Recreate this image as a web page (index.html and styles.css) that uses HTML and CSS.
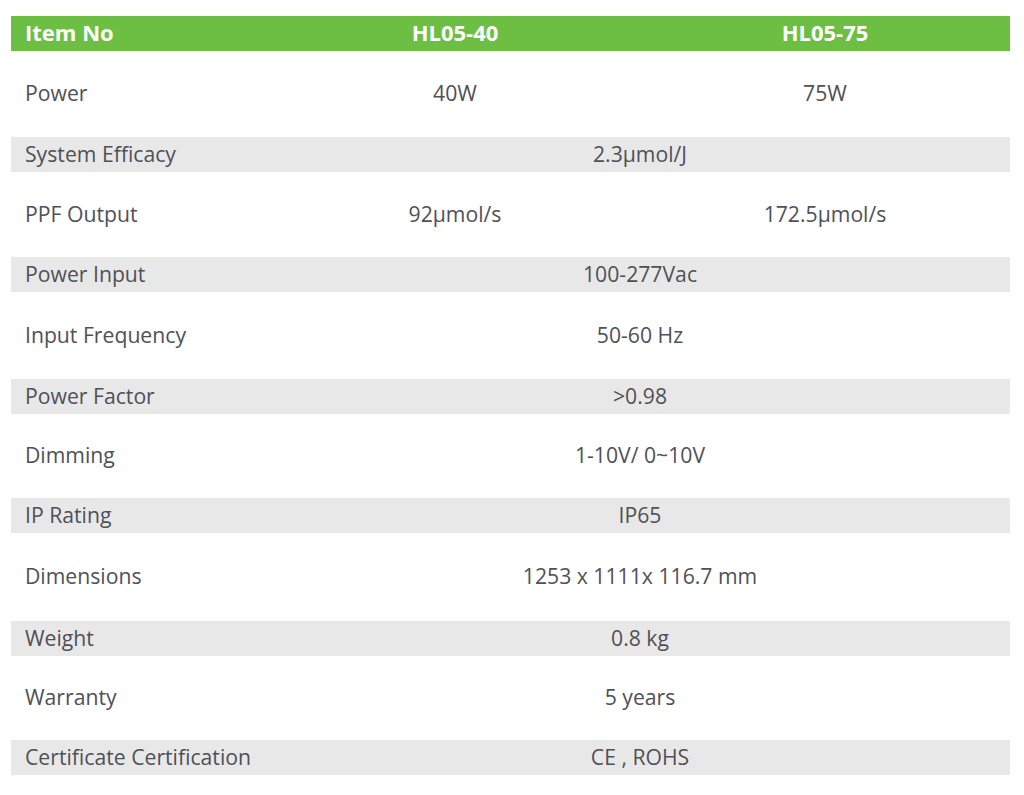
FILE: index.html
```html
<!DOCTYPE html>
<html>
<head>
<meta charset="utf-8">
<link rel="stylesheet" href="styles.css">
</head>
<body>
<div class="wrap">
<table class="spec">
  <colgroup><col class="c1"><col class="c2"><col class="c3"></colgroup>
  <thead>
    <tr class="head"><th class="lbl">Item No</th><th>HL05-40</th><th>HL05-75</th></tr>
  </thead>
  <tbody>
    <tr class="w h86"><td class="lbl">Power</td><td>40W</td><td>75W</td></tr>
    <tr class="g"><td class="lbl">System Efficacy</td><td colspan="2">2.3μmol/J</td></tr>
    <tr class="w h85"><td class="lbl">PPF Output</td><td>92μmol/s</td><td>172.5μmol/s</td></tr>
    <tr class="g"><td class="lbl">Power Input</td><td colspan="2">100-277Vac</td></tr>
    <tr class="w h87"><td class="lbl">Input Frequency</td><td colspan="2">50-60 Hz</td></tr>
    <tr class="g"><td class="lbl">Power Factor</td><td colspan="2">&gt;0.98</td></tr>
    <tr class="w h84"><td class="lbl">Dimming</td><td colspan="2">1-10V/ 0~10V</td></tr>
    <tr class="g"><td class="lbl">IP Rating</td><td colspan="2">IP65</td></tr>
    <tr class="w h88"><td class="lbl">Dimensions</td><td colspan="2">1253 x 1111x 116.7 mm</td></tr>
    <tr class="g"><td class="lbl">Weight</td><td colspan="2">0.8 kg</td></tr>
    <tr class="w h84"><td class="lbl">Warranty</td><td colspan="2">5 years</td></tr>
    <tr class="g"><td class="lbl">Certificate Certification</td><td colspan="2">CE , ROHS</td></tr>
  </tbody>
</table>
</div>
<div class="strip"></div>
</body>
</html>
```
FILE: styles.css
```css
html, body {
  margin: 0;
  padding: 0;
  background: #ffffff;
}
body {
  font-family: "Open Sans", "Liberation Sans", sans-serif;
  color: #4f5156;
  width: 1024px;
  height: 795px;
  overflow: hidden;
}
.wrap {
  padding: 16px 14px 0 11px;
  height: 774px;
}
.spec {
  border-collapse: collapse;
  width: 999px;
  table-layout: fixed;
}
.c1 { width: 259px; }
.c2 { width: 370px; }
.c3 { width: 370px; }
.spec th, .spec td {
  padding: 0 0 2px 0;
  text-align: center;
  vertical-align: middle;
  font-size: 21.2px;
  line-height: 26px;
}
.spec .lbl {
  text-align: left;
  padding-left: 14px;
}
.head {
  background: #6dbf44;
  height: 35px;
}
.head th {
  color: #ffffff;
  font-weight: 700;
  font-size: 22px;
  padding-bottom: 4px;
}
.w { background: #ffffff; }
.h84 { height: 84px; }
.h85 { height: 85px; }
.h86 { height: 86px; }
.h87 { height: 87px; }
.h88 { height: 88px; }
.g { height: 35px; background: #e8e8e9; }
.strip {
  height: 21px;
  border-top: 16px solid #ffffff;
  box-sizing: border-box;
  background: #efefef;
}
```
